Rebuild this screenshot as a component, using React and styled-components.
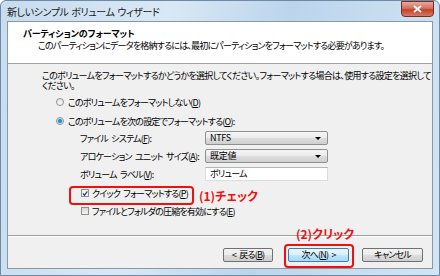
import React from "react";
import styled, { createGlobalStyle } from "styled-components";

const GlobalStyle = createGlobalStyle`
  html, body {
    margin: 0;
    padding: 0;
    background: #ffffff;
  }
  body {
    font-family: "Noto Sans CJK JP", "Noto Sans", sans-serif;
    font-feature-settings: "palt";
    font-size: 9px;
    letter-spacing: -0.8px;
    word-spacing: 2px;
    color: #000;
  }
`;

function App() {
  return (
    <>
      <GlobalStyle />
      <Frame>
        <TitleBar>
          <TitleText>新しいシンプル ボリューム ウィザード</TitleText>
          <CloseButton>
            <svg width="9" height="8" viewBox="0 0 9 8">
              <path d="M1 1 L8 7 M8 1 L1 7" stroke="#fff" strokeWidth="1.8" />
            </svg>
          </CloseButton>
        </TitleBar>

        <Client>
          <Header>
            <HeaderTitle>パーティションのフォーマット</HeaderTitle>
            <HeaderSub>
              このパーティションにデータを格納するには、最初にパーティションをフォーマットする必要があります。
            </HeaderSub>
          </Header>

          <Body>
            <Intro>
              このボリュームをフォーマットするかどうかを選択してください。フォーマットする場合は、使用する設定を選択して
              <br />
              ください。
            </Intro>

            <OptionRow $top={5}>
              <Radio />
              <span>
                このボリュームをフォーマットしない(<u>D</u>)
              </span>
            </OptionRow>
            <OptionRow $top={7}>
              <Radio $checked />
              <span>
                このボリュームを次の設定でフォーマットする(<u>O</u>):
              </span>
            </OptionRow>

            <FormGrid>
              <FieldLabel>
                ファイル システム(<u>F</u>):
              </FieldLabel>
              <Combo>
                NTFS
                <Arrow />
              </Combo>
              <FieldLabel>
                アロケーション ユニット サイズ(<u>A</u>):
              </FieldLabel>
              <Combo>
                既定値
                <Arrow />
              </Combo>
              <FieldLabel>
                ボリューム ラベル(<u>V</u>):
              </FieldLabel>
              <TextBox>ボリューム</TextBox>
            </FormGrid>

            <CheckRow $top={6}>
              <CheckBox $checked>
                <svg width="7" height="7" viewBox="0 0 7 7">
                  <path d="M1 3.5 L3 5.5 L6.2 1" fill="none" stroke="#2a3f8a" strokeWidth="1.4" />
                </svg>
              </CheckBox>
              <span>
                クイック フォーマットする(<u>P</u>)
              </span>
            </CheckRow>
            <CheckRow $top={6}>
              <CheckBox />
              <span>
                ファイルとフォルダの圧縮を有効にする(<u>E</u>)
              </span>
            </CheckRow>
          </Body>

          <Footer>
            <Button $width={50}>
              &lt; 戻る(<u>B</u>)
            </Button>
            <Button $width={61} $primary $gap={15}>
              次へ(<u>N</u>) &gt;
            </Button>
            <Button $width={61} $gap={13}>
              キャンセル
            </Button>
          </Footer>
        </Client>

        <Callout style={{ left: 68, top: 185, width: 125, height: 19 }} />
        <CalloutText style={{ left: 198, top: 186 }}>(1)チェック</CalloutText>
        <Callout style={{ left: 283, top: 243, width: 70, height: 24 }} />
        <CalloutText style={{ left: 295, top: 224 }}>(2)クリック</CalloutText>
      </Frame>
    </>
  );
}

const Frame = styled.div`
  position: relative;
  width: 440px;
  height: 276px;
  box-sizing: border-box;
  display: flex;
  flex-direction: column;
  padding: 0 6px 6px 6px;
  background: linear-gradient(100deg, #c7dcee 0%, #d9e8f5 35%, #bcd5eb 60%, #d3e5f4 100%);
  border: 1px solid #6d8aa6;
  border-radius: 6px 6px 0 0;
  overflow: hidden;
`;

const TitleBar = styled.div`
  height: 20px;
  display: flex;
  align-items: center;
  justify-content: space-between;
`;

const TitleText = styled.div`
  font-size: 10px;
  letter-spacing: -0.4px;
  word-spacing: 1px;
  color: #1a1a1a;
  margin-top: 1px;
`;

const CloseButton = styled.div`
  width: 31px;
  height: 14px;
  margin-top: -4px;
  margin-right: -1px;
  display: flex;
  align-items: center;
  justify-content: center;
  border: 1px solid #7a2c22;
  border-radius: 0 0 4px 4px;
  background: linear-gradient(#e9a99b 0%, #d5705c 45%, #c2412a 55%, #d9776a 100%);
`;

const Client = styled.div`
  flex: 1;
  display: flex;
  flex-direction: column;
  background: #f0f0f0;
  border: 1px solid #8798a8;
`;

const Header = styled.div`
  height: 42px;
  box-sizing: border-box;
  background: #ffffff;
  border-bottom: 1px solid #a0a0a0;
  padding: 6px 0 0 15px;
`;

const HeaderTitle = styled.div`
  font-size: 9px;
  font-weight: 700;
  letter-spacing: -0.1px;
  line-height: 12px;
`;

const HeaderSub = styled.div`
  line-height: 12px;
  padding-left: 15px;
  white-space: nowrap;
`;

const Body = styled.div`
  flex: 1;
  padding: 7px 0 0 34px;
  border-bottom: 1px solid #a0a0a0;
`;

const Intro = styled.p`
  margin: 0;
  line-height: 10px;
  letter-spacing: -0.7px;
  white-space: nowrap;
`;

const OptionRow = styled.div`
  display: flex;
  align-items: center;
  height: 12px;
  margin-top: ${(p) => p.$top}px;
  padding-left: 14px;
  gap: 4px;
  white-space: nowrap;
`;

const Radio = styled.span`
  width: 8px;
  height: 8px;
  box-sizing: border-box;
  border-radius: 50%;
  border: 1px solid #8e8f8f;
  background: ${(p) =>
    p.$checked
      ? "radial-gradient(circle, #2f8fd0 0 1.6px, #7dc3ea 2.2px, #f4f4f4 2.8px)"
      : "linear-gradient(#e4e4e4, #fafafa)"};
`;

const FormGrid = styled.div`
  display: grid;
  grid-template-columns: 125px 123px;
  grid-auto-rows: 14px;
  row-gap: 4px;
  margin-top: 4px;
  padding-left: 38px;
  align-items: center;
`;

const FieldLabel = styled.span`
  white-space: nowrap;
`;

const Combo = styled.div`
  position: relative;
  height: 14px;
  box-sizing: border-box;
  border: 1px solid #8e8f8f;
  border-radius: 2px;
  background: linear-gradient(#f4f4f4 0%, #ebebeb 50%, #dddddd 51%, #cfcfcf 100%);
  padding-left: 4px;
  line-height: 12px;
  letter-spacing: -0.3px;
`;

const Arrow = styled.span`
  position: absolute;
  right: 6px;
  top: 5px;
  width: 0;
  height: 0;
  border-left: 3px solid transparent;
  border-right: 3px solid transparent;
  border-top: 3px solid #000;
`;

const TextBox = styled.div`
  height: 14px;
  box-sizing: border-box;
  border: 1px solid #dcdcdc;
  border-top-color: #b5b5b5;
  background: #ffffff;
  padding-left: 4px;
  line-height: 12px;
`;

const CheckRow = styled.div`
  display: flex;
  align-items: center;
  height: 12px;
  margin-top: ${(p) => p.$top}px;
  padding-left: 39px;
  gap: 3px;
  white-space: nowrap;
`;

const CheckBox = styled.span`
  width: 8px;
  height: 8px;
  box-sizing: border-box;
  border: 1px solid #8e8f8f;
  background: ${(p) => (p.$checked ? "#f4f4f4" : "linear-gradient(#d8d8d8, #f4f4f4)")};
  display: flex;
  align-items: center;
  justify-content: center;
`;

const Footer = styled.div`
  height: 32px;
  display: flex;
  align-items: flex-start;
  justify-content: flex-end;
  padding: 11px 9px 0 0;
  box-sizing: border-box;
  border-top: 1px solid #ffffff;
`;

const Button = styled.div`
  width: ${(p) => p.$width}px;
  height: 14px;
  margin-left: ${(p) => p.$gap || 0}px;
  box-sizing: border-box;
  border: 1px solid ${(p) => (p.$primary ? "#3c7fb1" : "#707070")};
  border-radius: 2px;
  background: ${(p) =>
    p.$primary
      ? "linear-gradient(#eaf6fd 0%, #d9f0fc 50%, #bee6fd 51%, #a7d9f5 100%)"
      : "linear-gradient(#f2f2f2 0%, #ebebeb 50%, #dddddd 51%, #cfcfcf 100%)"};
  line-height: 12px;
  text-align: center;
  white-space: nowrap;
`;

const Callout = styled.div`
  position: absolute;
  box-sizing: border-box;
  border: 2px solid #ee1111;
  border-radius: 4px;
`;

const CalloutText = styled.div`
  position: absolute;
  color: #ee1111;
  font-size: 12px;
  font-weight: 700;
  letter-spacing: 0;
  word-spacing: 0;
  line-height: 18px;
  white-space: nowrap;
`;

export default App;
